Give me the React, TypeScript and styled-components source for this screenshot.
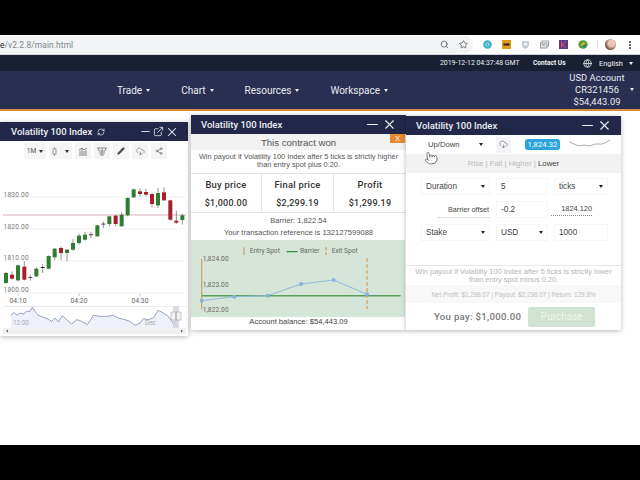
import React from "react";
import styled, { createGlobalStyle } from "styled-components";
import { Search, Star, RefreshCw, ExternalLink, Minus, X, Globe, Share2, Pencil, CloudDownload, Pointer } from "lucide-react";

const Global = createGlobalStyle`
  html, body { margin: 0; padding: 0; background: #000; }
  body { width: 640px; height: 480px; overflow: hidden; font-family: Roboto, "Liberation Sans", sans-serif; }
  * { box-sizing: border-box; }
`;

const Page = styled.div`width:640px;height:480px;display:flex;flex-direction:column;background:#000;`;
const TopBlack = styled.div`height:35px;flex:none;`;
const BrowserBar = styled.div`height:20px;flex:none;background:#fff;display:flex;align-items:center;border-bottom:1px solid #cfd3d8;`;
const Address = styled.div`flex:none;width:473px;height:17px;background:#f1f3f4;border-radius:0 9px 9px 0;display:flex;align-items:center;justify-content:space-between;padding-right:5px;font-size:8.4px;color:#80868b;letter-spacing:.1px;`;
const AddressIcons = styled.div`display:flex;align-items:center;gap:10px;color:#555;`;
const Extensions = styled.div`flex:1;display:flex;align-items:center;gap:10px;padding-left:10px;`;
const Divider = styled.div`width:1px;height:9px;background:#ddd;margin-right:-3px;margin-left:-1px;`;
const Avatar = styled.div`width:11px;height:11px;border-radius:50%;background:radial-gradient(circle at 60% 40%, #e8c8b0 35%, #6a4a3a 70%);`;
const Dots = styled.div`width:2px;height:8px;margin-left:3px;background:repeating-linear-gradient(#666 0 2px, transparent 2px 3px);`;
const Strip = styled.div`height:16px;flex:none;background:#1a2034;color:#eef0f4;display:flex;align-items:center;font-size:6.9px;padding-left:440px;`;
const StripTime = styled.span`width:93px;`;
const StripBold = styled.span`font-weight:700;width:50px;font-size:6.6px;`;
const Lang = styled.span`font-size:7.4px;margin-left:7px;width:30px;`;
const Caret = styled.span<{ $c?: string }>`display:inline-block;flex:none;width:0;height:0;border-left:2.5px solid transparent;border-right:2.5px solid transparent;border-top:3px solid ${p => p.$c || "#eef0f4"};`;
const Nav = styled.div`height:38px;flex:none;background:#2a2f51;display:flex;align-items:center;padding-left:117px;gap:31px;color:#e8eaf0;font-size:10px;position:relative;`;
const NavItem = styled.div`display:flex;align-items:center;gap:4px;`;
const Account = styled.div`margin-left:auto;width:68px;padding-right:18px;text-align:center;font-size:9.3px;line-height:12px;letter-spacing:.1px;display:flex;flex-direction:column;align-items:center;position:relative;white-space:nowrap;`;
const AccountCaret = styled.div`position:absolute;right:6px;top:16px;display:flex;`;
const OrangeLine = styled.div`height:2px;flex:none;background:#d98b3f;`;
const Desk = styled.div`flex:1;background:#fff;position:relative;`;
const Bottom = styled.div`height:35px;flex:none;background:#000;`;

const Win = styled.div<{ $x: number; $y: number; $w: number; $h: number }>`
  position:absolute;left:${p => p.$x}px;top:${p => p.$y}px;width:${p => p.$w}px;height:${p => p.$h}px;
  background:#fff;box-shadow:0 1px 5px rgba(0,0,0,.28);display:flex;flex-direction:column;overflow:hidden;
`;
const Title = styled.div<{ $pl: number }>`height:19px;flex:none;background:#23284a;color:#eceef4;display:flex;align-items:center;padding-left:${p => p.$pl}px;padding-right:9px;font-size:9.5px;font-weight:500;`;
const TitleIcons = styled.div`margin-left:auto;display:flex;align-items:center;gap:1px;`;

const Tools = styled.div`height:20px;flex:none;display:flex;gap:3px;padding:2px 0 0 24px;`;
const Tool = styled.div<{ $w?: number }>`width:${p => p.$w || 16}px;height:16px;background:#f5f5f6;color:#555;font-size:6.6px;display:flex;align-items:center;justify-content:center;gap:3px;`;
const Chart = styled.svg`display:block;flex:none;`;

const ContractHead = styled.div`height:16px;flex:none;background:#f2f2f2;color:#555;font-size:9.6px;text-align:center;line-height:17px;position:relative;font-family:"Liberation Sans",sans-serif;`;
const CloseTag = styled.div`position:absolute;right:1px;top:0;width:15px;height:9px;background:#e58a30;color:#fff;font-size:7px;line-height:9px;text-align:center;`;
const Desc = styled.div`height:23px;flex:none;padding:3px 4px 0;text-align:center;color:#555;font-size:7.4px;line-height:8px;font-family:"Liberation Sans",sans-serif;`;
const Stats = styled.div`height:40px;flex:none;display:grid;grid-template-columns:71px 72px 1fr;border-top:1px solid #e3e3e3;border-bottom:1px solid #e3e3e3;`;
const Stat = styled.div`display:flex;flex-direction:column;align-items:center;gap:8px;padding-top:5px;border-right:1px solid #e3e3e3;color:#333;font-size:9.4px;font-weight:500;letter-spacing:.25px;&:last-child{border-right:0;}`;
const Amount = styled.span`font-size:9px;`;
const Note = styled.div<{ $h: number }>`height:${p => p.$h}px;flex:none;text-align:center;color:#555;font-size:7.6px;font-family:"Liberation Sans",sans-serif;display:flex;align-items:center;justify-content:center;`;
const RefNote = styled(Note)`padding-bottom:3px;`;
const Balance = styled(Note)`color:#444;padding-bottom:3px;`;

const TypeRow = styled.div`height:19px;flex:none;display:flex;align-items:center;padding-left:22px;color:#444;font-size:7.7px;font-family:"Liberation Sans",sans-serif;position:relative;`;
const TypeLabel = styled.span`width:51px;`;
const CloudBtn = styled.div`width:15px;height:16px;margin-left:13px;background:#f4f4f6;display:flex;align-items:center;justify-content:center;color:#555;`;
const Spot = styled.div`width:35px;height:11px;margin-left:14px;background:#2aa4dc;color:#fff;border-radius:3px;font-size:7.6px;letter-spacing:.1px;line-height:11px;text-align:center;font-family:Roboto,sans-serif;`;
const Tabs = styled.div`height:19px;flex:none;background:#f2f2f2;color:#bbb;font-size:7.8px;display:flex;align-items:center;justify-content:center;font-family:"Liberation Sans",sans-serif;white-space:pre;`;
const Active = styled.span`color:#444;`;
const Form = styled.div`height:92px;flex:none;padding:5px 15px 0;display:grid;grid-template-columns:69px 52px 54px;grid-auto-rows:17px;column-gap:6px;row-gap:6px;align-content:start;`;
const Field = styled.div`border:1px solid #f6f6f6;display:flex;align-items:center;justify-content:space-between;padding:0 4px;color:#444;font-size:8.2px;font-family:"Liberation Sans",sans-serif;`;
const Offset = styled.div`border-bottom:1px solid #ddd;display:flex;align-items:center;justify-content:flex-end;color:#444;font-size:7.2px;font-family:"Liberation Sans",sans-serif;margin-left:16px;padding-right:1px;`;
const OffsetValue = styled.div`display:flex;align-items:center;justify-content:flex-end;margin:0 16px 2px -3px;border-bottom:1px dotted #888;color:#444;font-size:7.4px;font-family:"Liberation Sans",sans-serif;`;
const Info = styled.div`height:20px;flex:none;border-top:1px solid #e6e6e6;padding:2px 4px 0;text-align:center;color:#b4b4b4;font-size:7.4px;line-height:7.7px;font-family:"Liberation Sans",sans-serif;`;
const Profit = styled.div`height:18px;flex:none;background:#f8f8f8;color:#bdbdbd;font-size:6.35px;display:flex;align-items:center;justify-content:center;font-family:"Liberation Sans",sans-serif;`;
const Pay = styled.div`flex:1;display:flex;align-items:center;padding-left:28px;gap:7px;color:#777;font-size:9.6px;font-weight:500;letter-spacing:.3px;`;
const Purchase = styled.div`width:67px;height:20px;background:#cfe3d0;color:#eef5ee;border-radius:2px;font-size:10px;display:flex;align-items:center;justify-content:center;font-weight:400;letter-spacing:0;`;
const Hand = styled.div`position:absolute;left:18px;top:35px;color:#555;display:flex;transform:rotate(-8deg);`;
const Spark = styled.svg`margin-left:9px;`;

const Dl = () => <Caret $c="#222" />;

const Controls = ({ external }: { external?: boolean }) => (
  <TitleIcons>
    <Minus size={external ? 13 : 17} strokeWidth={1.6} />
    {external && <ExternalLink size={11} strokeWidth={1.7} />}
    <X size={external ? 14 : 15} strokeWidth={1.8} />
  </TitleIcons>
);

const ExtTeal = () => (
  <svg width="9" height="9" viewBox="0 0 9 9"><circle cx="4.5" cy="4.5" r="4.3" fill="#3cb4c4" /><circle cx="4.5" cy="4.5" r="2" fill="#a8e0e6" /><circle cx="4.5" cy="4.5" r=".9" fill="#2c8f9f" /></svg>
);
const ExtOrange = () => (
  <svg width="9" height="9" viewBox="0 0 9 9"><rect width="9" height="9" fill="#e09a1c" /><rect x="1.5" y="3.4" width="6" height="2.2" fill="#3a2a10" /></svg>
);
const ExtShield = () => (
  <svg width="9" height="9" viewBox="0 0 9 9"><path d="M1 1h7v4c0 2-2 3-3.5 4C3 8 1 7 1 5z" fill="#c4cbd2" /><circle cx="4.5" cy="4" r="1.5" fill="#fff" /></svg>
);
const ExtWindow = () => (
  <svg width="9" height="9" viewBox="0 0 9 9" fill="none" stroke="#8b949c" strokeWidth=".9"><rect x="2" y="1" width="6.5" height="5" /><rect x=".5" y="3" width="6.5" height="5" fill="#e6e9ec" /><path d="M2 5h3" stroke="#c06060" /></svg>
);
const ExtPurple = () => (
  <svg width="9" height="9" viewBox="0 0 9 9"><rect width="9" height="9" fill="#5a3a8c" /><path d="M2.5 1.5v6M7 1.5L3 5l4 2.5" stroke="#e0505a" strokeWidth="1" fill="none" /></svg>
);
const ExtGlobe = () => (
  <svg width="10" height="9" viewBox="0 0 10 9"><ellipse cx="5" cy="4.5" rx="4.6" ry="4.2" fill="#4e9a3a" /><path d="M2 6l3-4 3 1-2 2z" fill="#d9b23a" /><circle cx="6.6" cy="6" r="1.3" fill="#2d6fb0" /></svg>
);

type C = [number, number, number, number, number, string];
const candles: C[] = [
  [18, 135, 165, 132, 167, "g"], [36, 140, 152, 130, 155, "r"], [54, 112, 157, 110, 160, "g"], [73, 116, 155, 100, 157, "r"],
  [91, 147, 149, 140, 158, "k"], [109, 122, 145, 118, 147, "g"], [128, 117, 120, 108, 135, "k"], [146, 84, 122, 82, 124, "g"],
  [164, 62, 88, 60, 97, "g"], [183, 60, 75, 55, 97, "r"], [201, 65, 75, 63, 100, "g"], [219, 45, 65, 33, 68, "g"],
  [237, 23, 45, 17, 50, "g"], [255, 20, 35, 12, 38, "g"], [273, 19, 21, 12, 30, "k"], [292, -8, 25, -10, 26, "g"],
];
const upper: C[] = [
  [310, 317, 319, 310, 330, "k"], [328, 295, 318, 293, 325, "g"], [347, 293, 318, 291, 325, "r"], [365, 290, 325, 283, 326, "g"],
  [383, 240, 292, 238, 295, "g"], [401, 214, 238, 212, 240, "g"], [420, 220, 228, 212, 236, "r"], [438, 222, 230, 212, 235, "r"],
  [456, 228, 258, 225, 268, "r"], [474, 225, 262, 210, 270, "g"], [492, 223, 247, 208, 249, "r"], [511, 247, 305, 245, 308, "r"],
  [529, 308, 314, 278, 318, "r"], [547, 292, 306, 288, 320, "g"],
];
const nav = "33,262 42,253 50,262 60,255 70,258 80,250 90,250 97,238 105,250 115,262 130,268 145,273 155,280 165,270 175,282 187,263 200,275 215,288 230,275 245,280 262,290 280,262 300,265 320,265 340,262 355,270 375,275 390,280 405,292 420,285 430,272 445,275 460,270 475,247 490,255 505,265 522,290 535,260";
const colors: Record<string, string> = { g: "#2f7d32", r: "#a81f2c", k: "#222" };

const Candle = ({ d, base }: { d: C; base: number }) => {
  const [x, t, b, wt, wb, c] = d;
  const y = (v: number) => base + v / 3;
  return (
    <g>
      <line x1={x / 3} x2={x / 3} y1={y(wt)} y2={y(wb)} stroke="#666" strokeWidth=".7" />
      <rect x={x / 3 - 2} width={4} y={y(t)} height={Math.max(y(b) - y(t), .8)} fill={colors[c]} />
    </g>
  );
};

const MainChart = () => {
  const o = 161;
  const Y = (p: number) => p - o;
  const pts = nav.split(" ").map(s => { const [a, b] = s.split(",").map(Number); return `${a / 3},${228 + b / 3 - o}`; }).join(" ");
  const base = pts + ` ${535 / 3},${329 - o} 11,${329 - o}`;
  return (
    <Chart width={188} height={175} viewBox="0 0 188 175" fontFamily="Roboto, sans-serif">
      {[197, 229, 261, 293].map(p => <line key={p} x1={3} x2={186} y1={Y(p)} y2={Y(p)} stroke="#ececec" strokeWidth=".8" />)}
      <line x1={3} x2={186} y1={Y(215)} y2={Y(215)} stroke="#dcb0b8" strokeWidth="1.2" />
      {["1830.00", "1820.00", "1810.00", "1800.00"].map((t, i) => <text key={t} x={3.5} y={Y([197, 228.5, 260, 292][i])} fontSize="6.6" fill="#777" letterSpacing=".2">{t}</text>)}
      {candles.map((c, i) => <Candle key={i} d={c} base={228 - o} />)}
      {upper.map((c, i) => <Candle key={i} d={c} base={118 - o} />)}
      {([["04:10", 18], ["04:20", 79], ["04:30", 140]] as [string, number][]).map(([t, x]) => <g key={t}><text x={x} y={Y(303)} fontSize="6.8" fill="#666" textAnchor="middle">{t}</text><line x1={x} x2={x} y1={Y(293)} y2={Y(296)} stroke="#ccc" /></g>)}
      <rect x={3} y={Y(306)} width={183} height={.6} fill="#ddd" />
      <polygon points={base} fill="#eef1fa" />
      <polyline points={pts} fill="none" stroke="#7f8cb0" strokeWidth=".8" />
      <text x={13} y={Y(325)} fontSize="6.4" fill="#aaa">12:00</text>
      <text x={145} y={Y(325)} fontSize="6.4" fill="#aaa">Dec</text>
      <rect x={173} y={Y(306)} width={6} height={28} fill="#d0d3dc" opacity=".8" />
      <rect x={171} y={Y(312)} width={4.5} height={8} fill="#f2f2f2" stroke="#999" strokeWidth=".5" />
      <rect x={176.5} y={Y(312)} width={4.5} height={8} fill="#f2f2f2" stroke="#999" strokeWidth=".5" />
      <rect x={3} y={Y(328)} width={183} height={6} fill="#f0f0f0" />
      <polygon points={`6,${Y(331)} 8,${Y(329.5)} 8,${Y(332.5)}`} fill="#666" />
      <polygon points={`183,${Y(331)} 181,${Y(329.5)} 181,${Y(332.5)}`} fill="#666" />
    </Chart>
  );
};

const ContractChart = () => {
  const o = 240;
  const X = (v: number) => v / 3 - 1;
  const Y = (v: number) => v / 3 + 225 - o;
  const p = [[35, 227], [133, 215], [233, 212], [333, 177], [431, 165], [531, 208]];
  return (
    <Chart width={215} height={77} viewBox="0 0 215 77" fontFamily="Roboto, sans-serif">
      <rect width={214} height={77} fill="#d5e6d8" />
      <line x1={X(35)} x2={X(35)} y1={Y(102)} y2={Y(253)} stroke="#cda56c" strokeWidth="1.3" />
      <line x1={X(35)} x2={X(632)} y1={Y(212)} y2={Y(212)} stroke="#5a9e5d" strokeWidth="1.5" />
      <line x1={X(531)} x2={X(531)} y1={Y(100)} y2={Y(252)} stroke="#e0964a" strokeWidth="1.2" strokeDasharray="3.5 2.5" />
      <polyline points={p.map(a => `${X(a[0])},${Y(a[1])}`).join(" ")} fill="none" stroke="#8fb9de" strokeWidth="1" />
      {p.map(a => <circle key={a[0]} cx={X(a[0])} cy={Y(a[1])} r="2" fill="#86b2de" />)}
      {([["1,824.00", 102], ["1,823.00", 178], ["1,822.00", 253]] as [string, number][]).map(([t, y]) => <text key={t} x={X(38)} y={Y(y) + 2.4} fontSize="6.6" fill="#666" letterSpacing=".1">{t}</text>)}
      <line x1={X(162)} x2={X(162)} y1={Y(67)} y2={Y(90)} stroke="#cda56c" strokeWidth="1.3" />
      <text x={X(179)} y={Y(85)} fontSize="6.6" fill="#666">Entry Spot</text>
      <line x1={X(290)} x2={X(323)} y1={Y(80)} y2={Y(80)} stroke="#2f8a33" strokeWidth="1.2" />
      <text x={X(330)} y={Y(85)} fontSize="6.6" fill="#666">Barrier</text>
      <line x1={X(408)} x2={X(408)} y1={Y(67)} y2={Y(90)} stroke="#d99b4c" strokeWidth="1.3" strokeDasharray="3 2" />
      <text x={X(425)} y={Y(85)} fontSize="6.6" fill="#666">Exit Spot</text>
    </Chart>
  );
};

export default function App() {
  return (
    <Page>
      <Global />
      <TopBlack />
      <BrowserBar>
        <Address>
          <span><span style={{ color: "#222" }}>e</span>/v2.2.8/main.html</span>
          <AddressIcons><Search size={9} /><Star size={9} /></AddressIcons>
        </Address>
        <Extensions>
          <ExtTeal />
          <ExtOrange />
          <ExtShield />
          <ExtWindow />
          <ExtPurple />
          <ExtGlobe />
          <Divider />
          <Avatar />
          <Dots />
        </Extensions>
      </BrowserBar>
      <Strip>
        <StripTime>2019-12-12 04:37:48 GMT</StripTime>
        <StripBold>Contact Us</StripBold>
        <Globe size={9} />
        <Lang>English</Lang>
        <Caret />
      </Strip>
      <Nav>
        <NavItem>Trade <Caret /></NavItem>
        <NavItem>Chart <Caret /></NavItem>
        <NavItem>Resources <Caret /></NavItem>
        <NavItem>Workspace <Caret /></NavItem>
        <Account>
          <span>USD Account</span>
          <span>CR321456</span>
          <span>$54,443.09</span>
          <AccountCaret><Caret /></AccountCaret>
        </Account>
      </Nav>
      <OrangeLine />
      <Desk>
        <Win $x={0} $y={11} $w={188} $h={214}>
          <Title $pl={11}>
            Volatility 100 Index&nbsp;&nbsp;<RefreshCw size={8} strokeWidth={2} />
            <Controls external />
          </Title>
          <Tools>
            <Tool $w={22}>1M <Caret $c="#333" /></Tool>
            <Tool $w={23}>
              <svg width="5" height="9" viewBox="0 0 5 9"><path d="M2.5 0v9" stroke="#777" strokeWidth=".7" /><rect x="1" y="2" width="3" height="5" fill="#f5f5f6" stroke="#777" strokeWidth=".7" /></svg>
              &nbsp;<Caret $c="#333" />
            </Tool>
            <Tool>
              <svg width="9" height="9" viewBox="0 0 9 9" fill="none" stroke="#666" strokeWidth=".8"><path d="M1 9V4M3 9V2M5 9V4M7 9V3M0 3l3-2 2 2 3-2" /></svg>
            </Tool>
            <Tool>
              <svg width="10" height="9" viewBox="0 0 10 9" fill="none" stroke="#777" strokeWidth=".8"><path d="M0 1h10M1 1l1 3h6l1-3M5 1v7M3 8h4M2 6h6" /></svg>
            </Tool>
            <Tool><Pencil size={8} fill="#444" strokeWidth={1.5} /></Tool>
            <Tool><CloudDownload size={9} strokeWidth={1.4} /></Tool>
            <Tool><Share2 size={8} strokeWidth={1.5} /></Tool>
          </Tools>
          <MainChart />
        </Win>

        <Win $x={191} $y={4} $w={215} $h={215}>
          <Title $pl={10}>Volatility 100 Index<Controls /></Title>
          <ContractHead>This contract won<CloseTag>X</CloseTag></ContractHead>
          <Desc>Win payout if Volatility 100 Index after 5 ticks is strictly higher than entry spot plus 0.20.</Desc>
          <Stats>
            <Stat><span>Buy price</span><Amount>$1,000.00</Amount></Stat>
            <Stat><span>Final price</span><Amount>$2,299.19</Amount></Stat>
            <Stat><span>Profit</span><Amount>$1,299.19</Amount></Stat>
          </Stats>
          <Note $h={14}>Barrier: 1,822.54</Note>
          <RefNote $h={13}>Your transaction reference is 132127599088</RefNote>
          <ContractChart />
          <Balance $h={12}>Account balance: $54,443.09</Balance>
        </Win>

        <Win $x={406} $y={5} $w={215} $h={214}>
          <Title $pl={10}>Volatility 100 Index<Controls /></Title>
          <TypeRow>
            <TypeLabel>Up/Down</TypeLabel><Dl />
            <CloudBtn><CloudDownload size={9} strokeWidth={1.4} /></CloudBtn>
            <Spot>1,824.32</Spot>
            <Spark width={42} height={12} viewBox="0 0 42 12"><polyline points="0,3 5,5 10,7 15,6 20,7 27,5 33,5 38,3 41,1" fill="none" stroke="#777" strokeWidth=".6" /></Spark>
          </TypeRow>
          <Tabs>Rise | Fall | Higher | <Active>Lower</Active></Tabs>
          <Form>
            <Field>Duration <Dl /></Field>
            <Field>5</Field>
            <Field>ticks <Dl /></Field>
            <Offset>Barrier offset</Offset>
            <Field>-0.2</Field>
            <OffsetValue>1824.120</OffsetValue>
            <Field>Stake <Dl /></Field>
            <Field>USD <Dl /></Field>
            <Field>1000</Field>
          </Form>
          <Info>Win payout if Volatility 100 Index after 5 ticks is strictly lower than entry spot minus 0.20.</Info>
          <Profit>Net Profit: $1,298.07 | Payout: $2,298.07 | Return: 129.8%</Profit>
          <Pay>You pay: $1,000.00 <Purchase>Purchase</Purchase></Pay>
          <Hand><Pointer size={14} strokeWidth={1.2} fill="#fff" /></Hand>
        </Win>
      </Desk>
      <Bottom />
    </Page>
  );
}
